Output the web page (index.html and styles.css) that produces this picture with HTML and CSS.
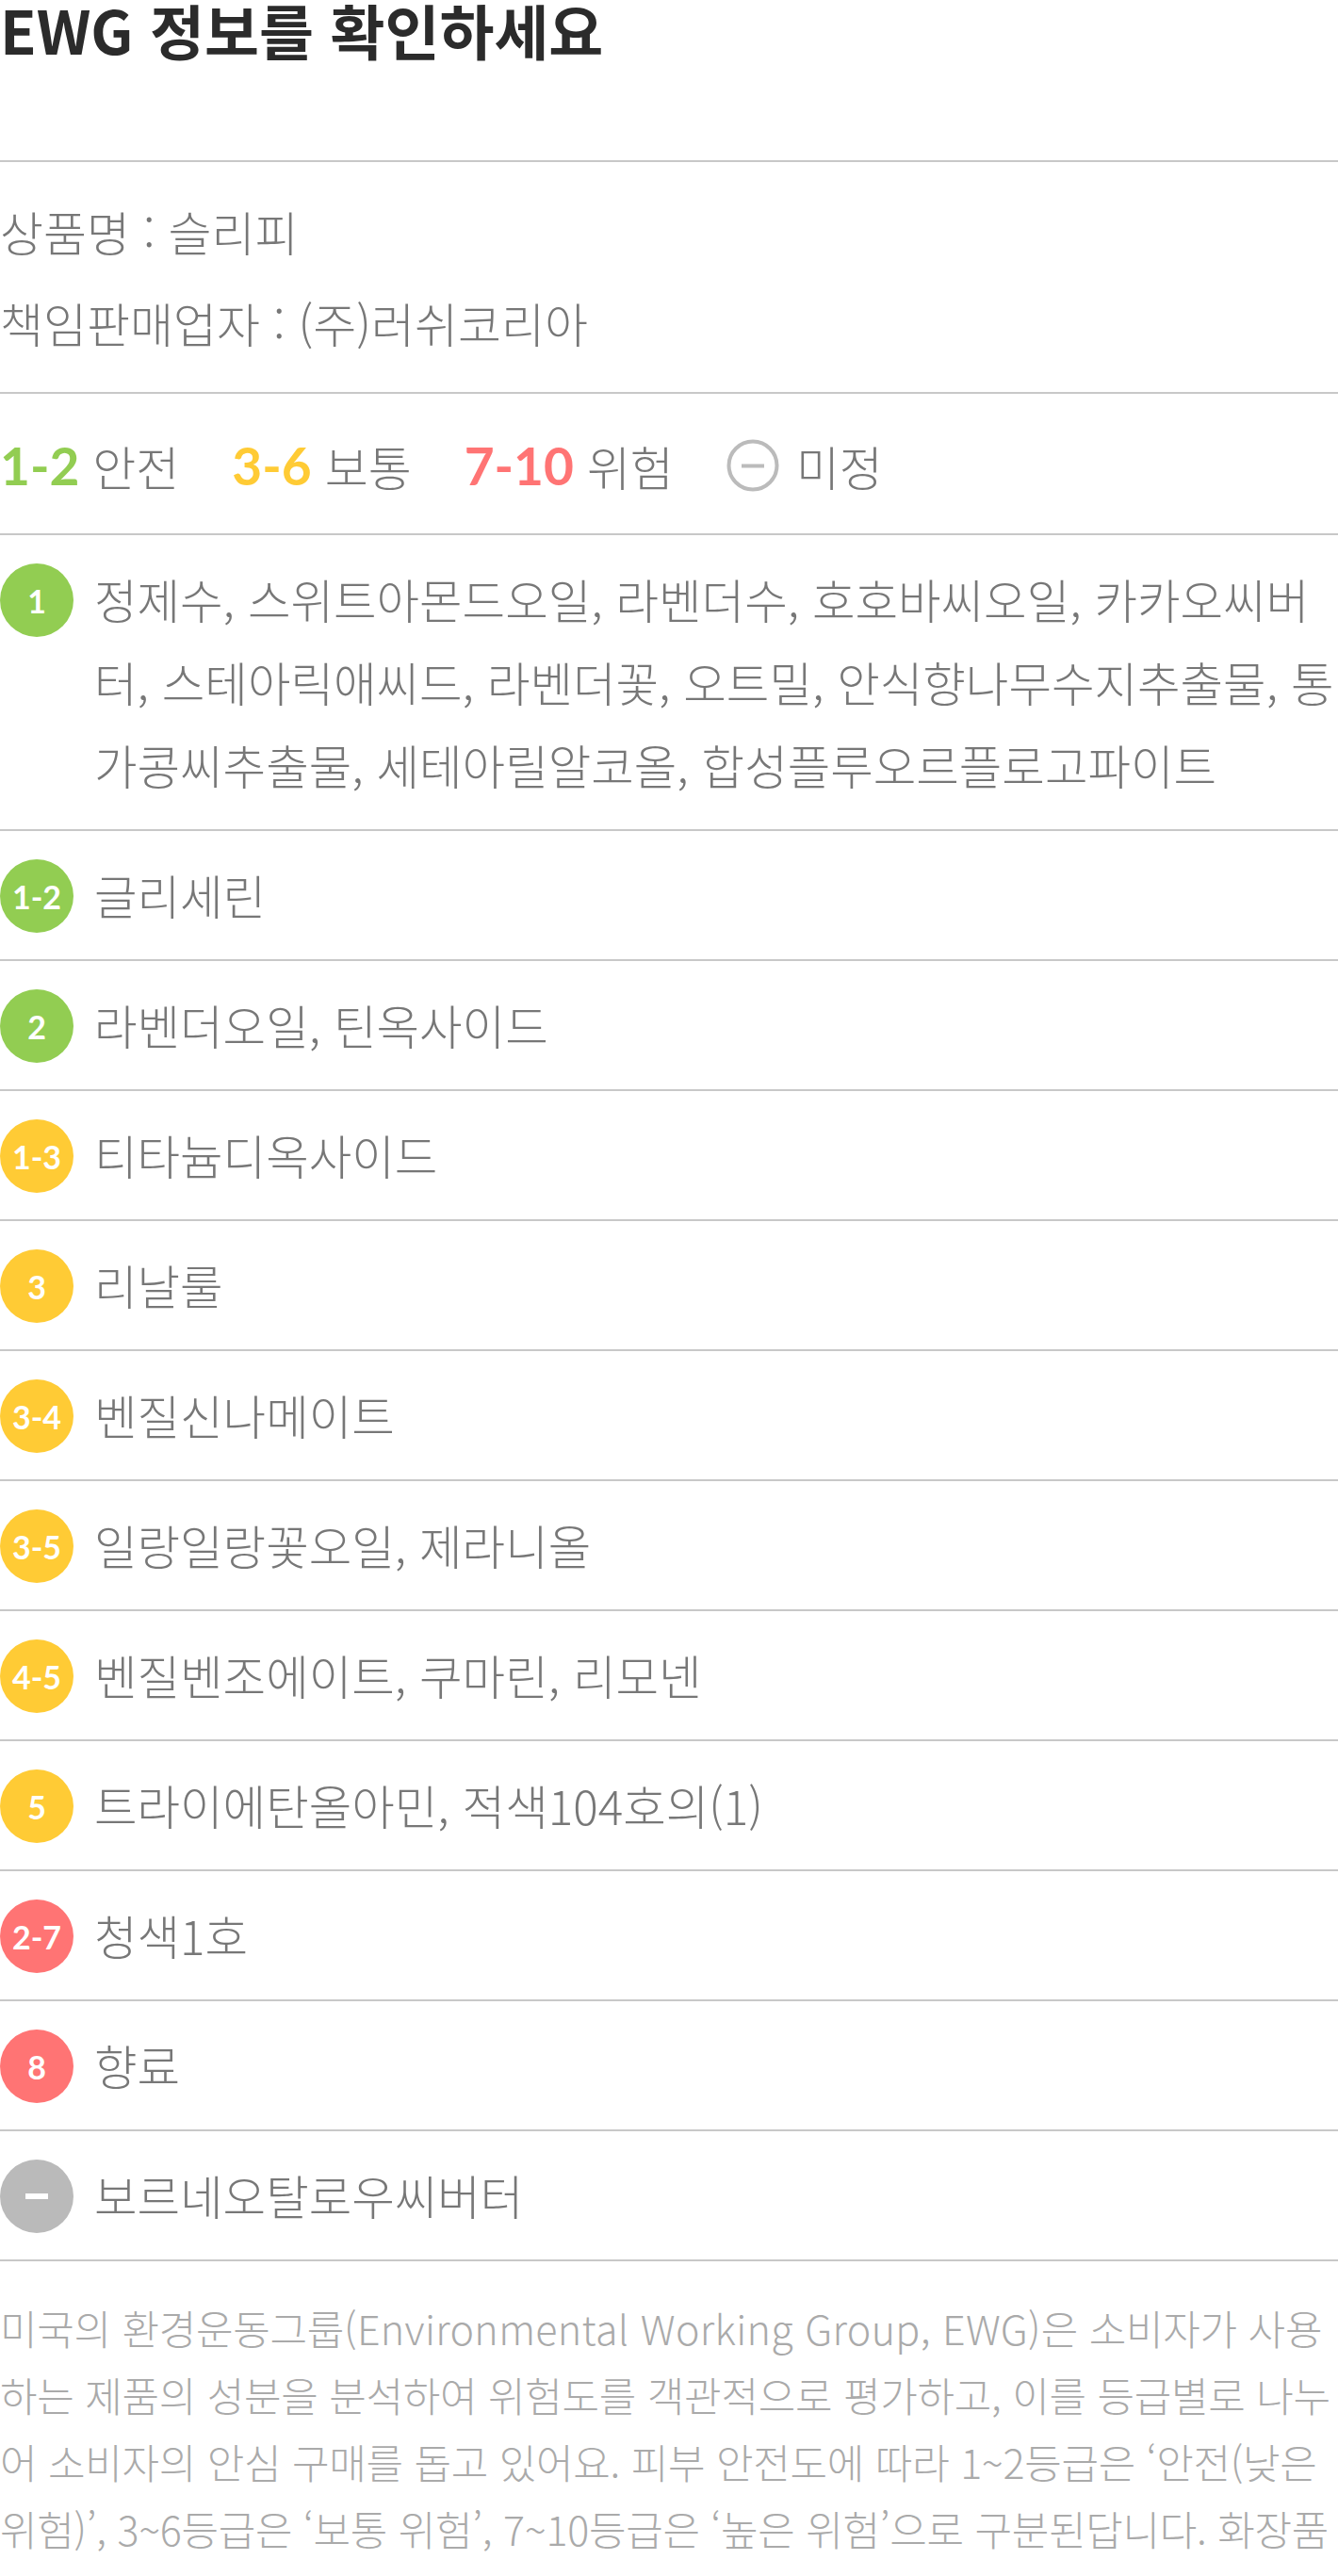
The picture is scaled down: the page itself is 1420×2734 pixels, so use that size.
FILE: index.html
```html
<!DOCTYPE html>
<html lang="ko">
  <head>
    <meta charset="UTF-8" />
    <meta name="viewport" content="width=device-width, initial-scale=1.0" />
    <title>EWG 정보</title>
    <link rel="stylesheet" href="styles.css">
  </head>
  <body>
    <main class="ewg">
      <h2 class="ewg-title">EWG 정보를 확인하세요</h2>

      <div class="product-info">
        <p>상품명 : 슬리피</p>
        <p>책임판매업자 : (주)러쉬코리아</p>
      </div>

      <div class="legend">
        <span class="legend-item"><b class="num safe">1-2</b> 안전</span>
        <span class="legend-item"><b class="num normal">3-6</b> 보통</span>
        <span class="legend-item"><b class="num danger">7-10</b> 위험</span>
        <span class="legend-item">
          <svg class="legend-icon" width="56" height="56" viewBox="0 0 56 56">
            <circle cx="28" cy="28" r="25.5" fill="none" stroke="#bbbbbb" stroke-width="4" />
            <rect x="16" y="26.5" width="24" height="4" fill="#bbbbbb" />
          </svg>
          미정
        </span>
      </div>

      <ul class="ingredients">
        <li class="ingredient">
          <span class="badge safe">1</span>
          <p>정제수, 스위트아몬드오일, 라벤더수, 호호바씨오일, 카카오씨버터, 스테아릭애씨드, 라벤더꽃, 오트밀, 안식향나무수지추출물, 통가콩씨추출물, 세테아릴알코올, 합성플루오르플로고파이트</p>
        </li>
        <li class="ingredient">
          <span class="badge safe">1-2</span>
          <p>글리세린</p>
        </li>
        <li class="ingredient">
          <span class="badge safe">2</span>
          <p>라벤더오일, 틴옥사이드</p>
        </li>
        <li class="ingredient">
          <span class="badge normal">1-3</span>
          <p>티타늄디옥사이드</p>
        </li>
        <li class="ingredient">
          <span class="badge normal">3</span>
          <p>리날룰</p>
        </li>
        <li class="ingredient">
          <span class="badge normal">3-4</span>
          <p>벤질신나메이트</p>
        </li>
        <li class="ingredient">
          <span class="badge normal">3-5</span>
          <p>일랑일랑꽃오일, 제라니올</p>
        </li>
        <li class="ingredient">
          <span class="badge normal">4-5</span>
          <p>벤질벤조에이트, 쿠마린, 리모넨</p>
        </li>
        <li class="ingredient">
          <span class="badge normal">5</span>
          <p>트라이에탄올아민, 적색104호의(1)</p>
        </li>
        <li class="ingredient">
          <span class="badge danger">2-7</span>
          <p>청색1호</p>
        </li>
        <li class="ingredient">
          <span class="badge danger">8</span>
          <p>향료</p>
        </li>
        <li class="ingredient">
          <span class="badge unknown"><i class="dash"></i></span>
          <p>보르네오탈로우씨버터</p>
        </li>
      </ul>

      <p class="ewg-desc">미국의 환경운동그룹<span class="en">(Environmental Working Group, EWG)</span>은 소비자가 사용하는 제품의 성분을 분석하여 위험도를 객관적으로 평가하고, 이를 등급별로 나누어 소비자의 안심 구매를 돕고 있어요. 피부 안전도에 따라 1~2등급은 ‘안전(낮은 위험)’, 3~6등급은 ‘보통 위험’, 7~10등급은 ‘높은 위험’으로 구분된답니다. 화장품 성분을 고를 때 참고해 주세요.</p>
    </main>
  </body>
</html>
```

FILE: styles.css
```css
/* Base */
* {
  box-sizing: border-box;
  margin: 0;
  padding: 0;
}

body {
  font-family: "Noto Sans CJK KR", "Noto Sans", sans-serif;
  font-weight: 300;
  background-color: #fff;
  color: #777;
  width: 1420px;
}

/* Title */
.ewg-title {
  font-size: 63px;
  line-height: 62px;
  font-weight: 700;
  color: #2b2b2b;
  padding-bottom: 108px;
  border-bottom: 2px solid #c8c8c8;
}

/* Product info */
.product-info {
  padding: 25px 0 25px;
  font-size: 50px;
  line-height: 97px;
  border-bottom: 2px solid #c8c8c8;
}

/* Legend */
.legend {
  display: flex;
  align-items: center;
  gap: 56px;
  padding: 32px 0 28px;
  font-size: 50px;
  line-height: 88px;
  border-bottom: 2px solid #c8c8c8;
}

.legend-item {
  display: flex;
  align-items: center;
  gap: 14px;
}

.num {
  font-family: Lato, "Open Sans", sans-serif;
  font-weight: 700;
  font-size: 55px;
}

.num.safe { color: #92cd52; }
.num.normal { color: #ffcb35; }
.num.danger { color: #ff7474; }

.legend-icon {
  display: block;
  margin-right: 4px;
}

/* Ingredients */
.ingredients {
  list-style: none;
}

.ingredient {
  display: flex;
  align-items: flex-start;
  gap: 22px;
  padding: 24px 0;
  border-bottom: 2px solid #c8c8c8;
}

.ingredient p {
  flex: 1;
  font-size: 49.5px;
  line-height: 88px;
}

.badge {
  flex-shrink: 0;
  width: 78px;
  height: 78px;
  margin-top: 6px;
  border-radius: 50%;
  display: flex;
  align-items: center;
  justify-content: center;
  font-family: Lato, "Open Sans", sans-serif;
  font-weight: 700;
  font-size: 34px;
  color: #fff;
}

.badge.safe { background-color: #92cd52; }
.badge.normal { background-color: #ffcb35; }
.badge.danger { background-color: #ff7474; }
.badge.unknown { background-color: #bababa; }

.dash {
  display: block;
  width: 24px;
  height: 6px;
  background-color: #fff;
}

/* Description */
.ewg-desc {
  padding-top: 35px;
  font-size: 43px;
  line-height: 71px;
  letter-spacing: -0.3px;
  color: #aaa;
}

.ewg-desc .en {
  letter-spacing: 0.3px;
}
```
